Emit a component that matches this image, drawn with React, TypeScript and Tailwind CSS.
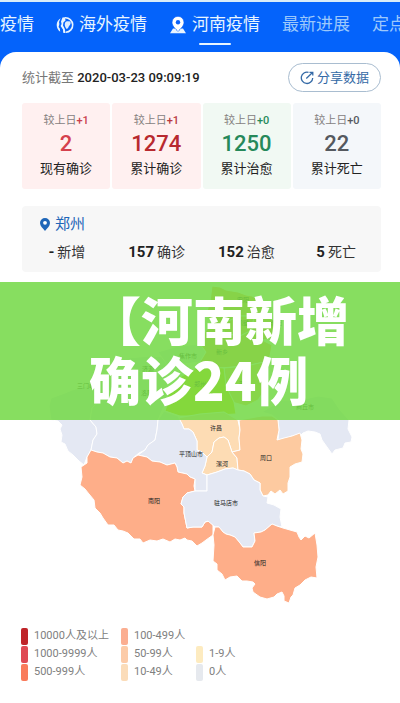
import { useState } from 'react';

const TABS = ['疫情', '海外疫情', '河南疫情', '最新进展', '定点医院'];

const STATS = [
  { label: '现有确诊', value: '2', diff: '+1', card: 'bg-[#fff0f0]', number: 'text-[#d5414d]', delta: 'text-[#c9414c]' },
  { label: '累计确诊', value: '1274', diff: '+1', card: 'bg-[#fff0f0]', number: 'text-[#b8292f]', delta: 'text-[#b8383f]' },
  { label: '累计治愈', value: '1250', diff: '+0', card: 'bg-[#f1f9f3]', number: 'text-[#26895a]', delta: 'text-[#26895a]' },
  { label: '累计死亡', value: '22', diff: '+0', card: 'bg-[#f4f7fa]', number: 'text-[#55595f]', delta: 'text-[#55595f]' },
];

const CITY = [
  { value: '-', label: '新增' },
  { value: '157', label: '确诊' },
  { value: '152', label: '治愈' },
  { value: '5', label: '死亡' },
];

const LEGEND = [
  [
    { label: '10000人及以上', color: 'bg-[#bf2429]' },
    { label: '1000-9999人', color: 'bg-[#df4a54]' },
    { label: '500-999人', color: 'bg-[#f97b5b]' },
  ],
  [
    { label: '100-499人', color: 'bg-[#fbae91]' },
    { label: '50-99人', color: 'bg-[#fccba8]' },
    { label: '10-49人', color: 'bg-[#fbdcb9]' },
  ],
  [
    { label: '1-9人', color: 'bg-[#fdebc0]' },
    { label: '0人', color: 'bg-[#e6e9ee]' },
  ],
];

const REGIONS = [
  { name: '三门峡', x: 86, y: 388, fill: '#e4e8f3', d: 'M51 420 49 406 51 398 65 393 72 390 90 385 112 378 118 384 104 396 92 408 90 420 96 427 97 434 93 440 91 450 87 457 84 465 79 461 73 455 68 451 65 444 61 442 62 435 60 429 62 425 58 421Z' },
  { name: '洛阳', x: 147, y: 395, fill: '#e4e8f3', d: 'M112 378 140 368 165 370 168 388 164 406 158 420 157 430 155 440 148 445 145 450 139 453 133 458 131 463 127 461 123 463 117 458 110 457 103 453 97 452 91 450 93 440 97 434 96 427 90 420 92 408 104 396 118 384Z' },
  { name: '济源', x: 148, y: 371, fill: '#e4e8f3', d: 'M128 358 150 356 168 357 165 370 140 372 130 366Z' },
  { name: '焦作市', x: 188, y: 358, fill: '#e4e8f3', d: 'M158 352 178 346 200 344 206 352 200 362 168 366Z' },
  { name: '安阳', x: 243, y: 302, fill: '#ffb35e', d: 'M212 286 220 287 226 290 238 292 246 295 252 296 268 304 262 312 254 316 240 316 226 322 214 326 206 314 210 302Z' },
  { name: '鹤壁', x: 243, y: 325, fill: '#ffb35e', d: 'M214 326 226 322 240 316 254 316 252 330 240 336 228 334Z' },
  { name: '濮阳', x: 276, y: 325, fill: '#ffb35e', d: 'M254 316 262 312 272 320 280 330 276 338 262 340 252 330Z' },
  { name: '新乡', x: 222, y: 354, fill: '#ffb35e', d: 'M200 344 206 330 214 326 228 334 240 336 252 330 262 340 272 345 270 356 264 362 246 366 220 368 200 362 206 352Z' },
  { name: '开封', x: 245, y: 386, fill: '#ffc768', d: 'M224 368 246 366 264 362 268 374 266 388 258 400 246 406 232 402 226 386Z' },
  { name: '郑州', x: 200, y: 386, fill: '#ebd810', d: 'M168 388 182 376 200 366 224 368 226 386 234 402 236 414 200 416 180 416 165 411 168 402Z' },
  { name: '商丘市', x: 305, y: 409, fill: '#e4e8f3', d: 'M262 412 282 400 300 400 318 396 332 398 340 410 349 420 348 429 352 437 351 442 345 443 343 448 335 450 332 454 327 447 322 440 320 434 315 432 308 431 303 433 298 438 292 436 287 438 278 440 279 430 278 420 272 415Z' },
  { name: '许昌', x: 216, y: 430, fill: '#fddcb4', d: 'M182 424 178 418 200 414 224 412 238 420 240 430 239 438 240 450 232 452 230 446 228 440 224 437 219 438 214 442 212 452 207 457 202 452 197 450 197 441 193 432 189 429 184 429Z' },
  { name: '漯河', x: 222, y: 466, fill: '#fddcb4', d: 'M214 442 219 438 224 437 228 440 230 446 232 452 237 458 238 470 233 468 225 469 217 472 207 475 202 473 205 466 207 457 212 452Z' },
  { name: '周口', x: 266, y: 460, fill: '#fdcaa0', d: 'M239 420 256 417 262 416 272 416 278 420 279 430 277 440 284 438 292 436 300 433 302 440 301 449 303 454 302 462 295 464 290 467 290 477 288 483 288 491 283 494 280 490 275 494 271 491 268 495 263 496 260 490 260 483 254 480 250 474 244 471 238 470 237 458 232 452 240 450 239 438 240 430Z' },
  { name: '平顶山市', x: 191, y: 456, fill: '#e4e8f3', d: 'M164 411 178 416 182 424 184 429 189 429 193 432 197 441 197 450 202 452 207 457 205 466 202 473 207 475 207 491 195 491 195 479 190 477 187 474 178 472 177 467 175 463 167 465 160 462 152 461 147 457 138 455 145 450 148 445 155 440 157 430 158 420Z' },
  { name: '南阳', x: 154, y: 503, fill: '#feae89', d: 'M91 450 97 452 103 453 110 457 117 458 123 463 127 461 131 463 133 458 138 455 147 457 152 461 160 462 167 465 175 463 177 467 178 472 187 474 190 477 195 479 194 486 195 491 187 493 183 497 181 504 184 507 184 513 187 528 193 527 202 527 205 522 210 521 213 525 213 535 206 540 202 543 197 546 192 541 187 540 185 538 180 540 175 539 170 542 163 539 157 541 150 540 143 543 140 539 134 539 128 533 123 531 118 530 114 525 108 525 103 518 100 513 95 508 94 500 89 494 85 489 80 485 82 477 81 467 87 463 87 457Z' },
  { name: '驻马店市', x: 226, y: 505, fill: '#e4e8f3', d: 'M207 475 217 472 225 469 233 468 238 470 244 471 250 474 254 480 260 483 260 490 263 496 268 497 267 503 274 505 281 509 280 517 282 527 277 526 272 524 265 530 261 532 254 533 255 541 252 547 243 547 240 543 235 537 230 535 226 534 223 532 219 527 215 527 208 521 205 522 202 527 193 527 187 528 184 513 184 507 181 504 183 497 187 493 195 491 207 491Z' },
  { name: '信阳', x: 260, y: 565, fill: '#feae89', d: 'M215 527 219 527 223 532 226 534 230 535 235 537 240 543 243 547 252 547 255 541 254 533 261 532 265 530 272 524 277 526 283 528 290 530 297 532 299 537 301 540 305 536 309 538 315 533 317 545 318 557 316 567 317 578 311 577 305 580 300 585 295 588 293 595 291 597 289 603 284 601 284 596 282 592 277 594 274 597 267 599 260 597 253 592 252 588 255 584 253 582 247 581 242 581 237 576 230 577 225 580 222 574 217 570 217 564 213 561 214 545 213 535Z' },
];

function GlobeIcon() {
  return (
    <svg viewBox="0 0 18 18" className="h-[18px] w-[18px] shrink-0" aria-hidden="true">
      <path d="M4.600 2.200A8 8 0 0 0 4.200 15.700L3.800 12.500 2.600 11 3.400 8 3 6z" fill="#e8f4ff" />
      <path d="M6.500 1.400 5 5.500 5.600 8 4.600 10 7 13.500 7.200 16.800A8 8 0 0 0 9.500 17L8.800 13 7 9.500 7.400 6.500 9.500 4.500 9 1.200z" fill="#e8f4ff" />
      <path d="M9 1.700a7.300 7.300 0 0 1 .8 14.600" fill="none" stroke="#e8f4ff" strokeWidth="1.600" />
      <path d="M9.200 6.500c1.500-2 3-.8 5-1.200 1 1.500.4 3.700-1.200 4.700-.6 1.500-1.200 2.600-2.200 3C9.500 11.500 8 9 9.200 6.500z" fill="#dcebff" />
    </svg>
  );
}

function PlaceIcon() {
  return (
    <svg viewBox="0 0 18 18" className="h-[18px] w-[18px] shrink-0" aria-hidden="true">
      <path d="M4 12.500h10l3 4.800H1z" fill="#e8f4ff" />
      <path
        d="M9 .3a6 6 0 0 0-6 6c0 3.800 3.600 6.600 6 9.100 2.400-2.500 6-5.300 6-9.100a6 6 0 0 0-6-6z"
        fill="#fff"
        stroke="#0b62fa"
        strokeWidth=".7"
      />
      <circle cx="9" cy="6.300" r="2.200" fill="#0b62fa" />
    </svg>
  );
}

function ShareIcon() {
  return (
    <svg viewBox="0 0 14 14" className="h-[14px] w-[14px]" fill="none" stroke="#356aa6" strokeWidth="1.300" aria-hidden="true">
      <path d="M8.500 1.300A5.700 5.700 0 1 0 12.700 7" />
      <path d="M6.300 7.500 12.500 1.500M9.500 1.300h3.300v3.300" />
    </svg>
  );
}

function PinIcon() {
  return (
    <svg viewBox="0 0 10 13" className="h-[13px] w-[10px]" aria-hidden="true">
      <path d="M5 0a5 5 0 0 0-5 5c0 3 3 5.500 5 8 2-2.500 5-5 5-8a5 5 0 0 0-5-5z" fill="#1f66b8" />
      <circle cx="5" cy="4.800" r="1.900" fill="#fff" />
    </svg>
  );
}

function HenanMap() {
  return (
    <svg viewBox="0 280 400 338" className="block w-full" role="img" aria-label="河南疫情地图">
      {REGIONS.map(r => (
        <path key={r.name} d={r.d} fill={r.fill} stroke="#fff" strokeWidth="1" strokeLinejoin="round" />
      ))}
      {REGIONS.map(r => (
        <text key={r.name} x={r.x} y={r.y} fontSize="6" textAnchor="middle" fill="#222">
          {r.name}
        </text>
      ))}
    </svg>
  );
}

export default function App() {
  const [active, setActive] = useState('河南疫情');

  return (
    <div className="min-h-screen overflow-hidden border-t-2 border-[#d9ecf8] bg-[#0463fb] font-[Roboto,'Noto_Sans_CJK_SC',sans-serif]">
      {/* 顶部导航 */}
      <nav className="flex h-[50px] gap-[22px] overflow-hidden">
        {TABS.map(tab => (
          <button
            key={tab}
            onClick={() => setActive(tab)}
            className={`relative flex h-[46px] shrink-0 items-center gap-[5px] text-[17px] whitespace-nowrap ${
              tab === '最新进展' || tab === '定点医院' ? 'text-[#9cc8fb]' : 'text-[#e8f5ff]'
            }`}
          >
            {tab === '海外疫情' && <GlobeIcon />}
            {tab === '河南疫情' && <PlaceIcon />}
            {tab}
            {tab === active && <span className="absolute bottom-[3px] left-1/2 h-[2px] w-8 -translate-x-1/2 rounded-full bg-[#e8f5ff]" />}
          </button>
        ))}
      </nav>

      <main className="rounded-t-2xl bg-white pb-6">
        <div className="pt-[11px] pr-[19px] pl-[22px]">
          <div className="flex h-[29px] items-center justify-between">
            <p className="text-[13px] text-[#777]">
              统计截至 <span className="font-medium text-[#222]">2020-03-23 09:09:19</span>
            </p>
            <button className="flex h-[29px] items-center gap-[3px] rounded-full border border-[#a9bdd0] px-[11px] text-[13px] text-[#356aa6]">
              <ShareIcon />
              分享数据
            </button>
          </div>

          {/* 全省数据 */}
          <div className="mt-[11px] grid grid-cols-4 gap-[2px]">
            {STATS.map(s => (
              <div key={s.label} className={`flex h-[86px] flex-col items-center rounded-[3px] pt-[10px] ${s.card}`}>
                <div className="text-[11px] leading-4 text-[#85817f]">
                  较上日<span className={`font-medium ${s.delta}`}>{s.diff}</span>
                </div>
                <div className={`text-[22px] leading-[30px] font-medium ${s.number}`}>{s.value}</div>
                <div className="text-[13px] leading-5 text-[#222]">{s.label}</div>
              </div>
            ))}
          </div>

          {/* 城市数据 */}
          <section className="mt-[17px] h-[66px] rounded-[4px] bg-[#f7f7f7] pt-2">
            <h2 className="flex items-center gap-[5px] pl-[18px] text-[15px] leading-5 text-[#1f66b8]">
              <PinIcon />
              郑州
            </h2>
            <div className="mt-2 grid grid-cols-4">
              {CITY.map(c => (
                <div key={c.label} className="flex items-center justify-center gap-[3px] text-[14px] leading-5 text-[#333]">
                  <b className="text-[15px] font-bold text-[#222]">{c.value}</b>
                  {c.label}
                </div>
              ))}
            </div>
          </section>
        </div>

        <div className="relative mt-2">
          <HenanMap />
          {/* 标题横幅 */}
          <div className="absolute inset-x-0 top-[2px] flex h-[138px] items-center bg-[#72d844]/85 pb-1 pl-[89px]">
            <h1 className="text-[52px] leading-[60px] font-black whitespace-nowrap text-white font-['Noto_Sans_CJK_SC',sans-serif]">
              【河南新增
              <br />
              确诊24例
            </h1>
          </div>
        </div>

        {/* 图例 */}
        <div className="mt-[9px] flex items-end pl-[21px]">
          {LEGEND.map((col, i) => (
            <ul key={i} className={i === 0 ? 'w-[100px]' : i === 1 ? 'w-[75px]' : ''}>
              {col.map(l => (
                <li key={l.label} className="flex h-[18px] items-center gap-[6px] text-[11px] whitespace-nowrap text-[#808080]">
                  <span className={`h-[17px] w-[7px] rounded-[2px] ${l.color}`} />
                  {l.label}
                </li>
              ))}
            </ul>
          ))}
        </div>
      </main>
    </div>
  );
}
